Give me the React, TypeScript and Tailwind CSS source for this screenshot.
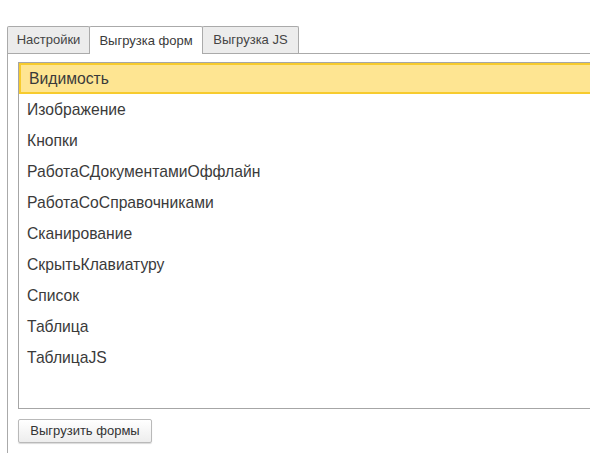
const tabs = [
  { label: "Настройки", width: "w-[83px]" },
  { label: "Выгрузка форм", width: "w-[114px]", active: true },
  { label: "Выгрузка JS", width: "w-[97px]" },
];

const forms = [
  "Видимость",
  "Изображение",
  "Кнопки",
  "РаботаСДокументамиОффлайн",
  "РаботаСоСправочниками",
  "Сканирование",
  "СкрытьКлавиатуру",
  "Список",
  "Таблица",
  "ТаблицаJS",
];

export default function App() {
  return (
    <div className="h-[453px] w-[590px] overflow-hidden bg-white pl-[7px] pt-[26px] font-['Liberation_Sans',Arial,sans-serif] text-[#3a3a3a]">
      {/* Tabs */}
      <div className="flex h-[28px] w-[700px] border-b border-[#aaa]">
        {tabs.map((t) => (
          <div
            key={t.label}
            className={
              "-ml-px flex items-center justify-center rounded-t-[2px] border border-b-0 border-[#aaa] text-[13px] first:ml-0 " +
              t.width +
              (t.active ? " relative -mb-px h-[28px] bg-white" : " bg-[#ececec] text-[#444]")
            }
          >
            {t.label}
          </div>
        ))}
      </div>

      {/* Panel */}
      <div className="h-[400px] border-l border-[#aaa] pl-[10px] pt-[8px]">
        <div className="h-[347px] w-[600px] border border-[#a6a6a6] bg-white">
          {forms.map((f, i) => (
            <div
              key={f}
              className={
                "flex h-[31px] items-center pl-[8px] text-[15.7px] " +
                (i === 0 ? "border-2 border-[#f7cb2d] bg-[#fee592] pl-[7px]" : "")
              }
            >
              {f}
            </div>
          ))}
        </div>
        <button className="mt-[10px] h-[24px] w-[134px] rounded-[2px] border border-[#b9b9b9] bg-gradient-to-b from-white to-[#ededed] text-[13px] text-[#333] shadow-[0_1px_1px_rgba(0,0,0,0.15)]">
          Выгрузить формы
        </button>
      </div>
    </div>
  );
}
